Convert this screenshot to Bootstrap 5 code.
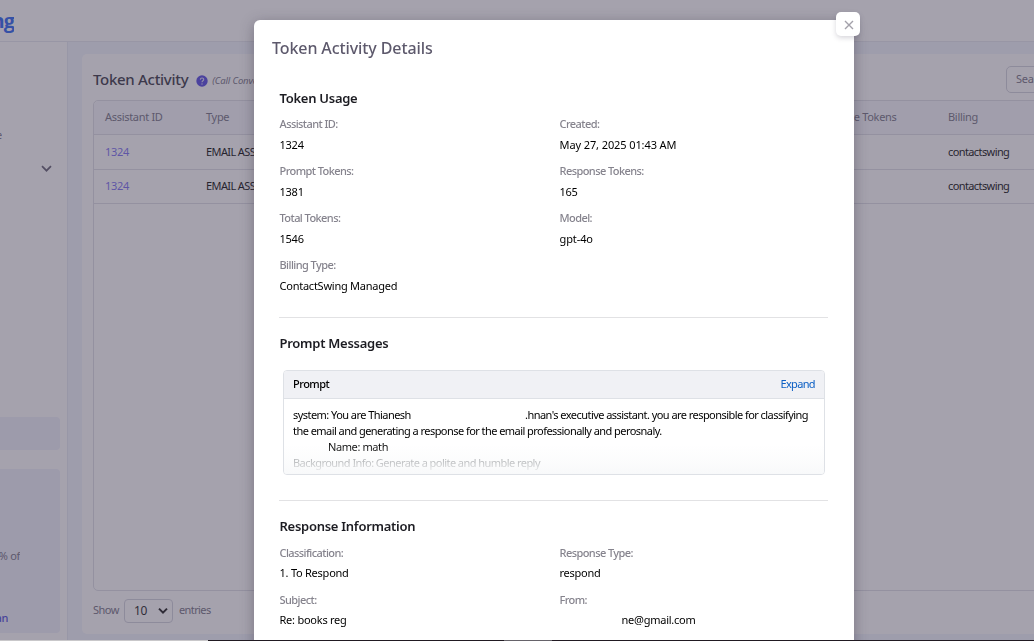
<!DOCTYPE html>
<html lang="en">
<head>
<meta charset="utf-8">
<title>Token Activity</title>
<link rel="stylesheet" href="https://cdn.jsdelivr.net/npm/bootstrap@5.3.0/dist/css/bootstrap.min.css">
<style>
html,body{height:641px;overflow:hidden}
body{font-family:"Noto Sans","Open Sans",sans-serif;font-size:11px;line-height:20px;color:#000;background:#fff;letter-spacing:-.3px}
.app-shell{width:1034px;height:641px;overflow:hidden}
.topbar{height:42px;border-bottom:1px solid #e4e6ee}
.logo-end{width:14px;height:41px;line-height:41px;font-family:"Open Sans",sans-serif;font-size:20px;font-weight:700;letter-spacing:-1px;color:#1f5cf0}
.side{width:68px;height:599px;border-right:1px solid #e4e8f2}
.clip-end{overflow:hidden;white-space:nowrap;display:flex;justify-content:flex-end}
.side-panel{width:60px;background:#eef0fb;border-radius:0 4px 4px 0}
.main-area{background:#f0f4fd;padding:12px 0 7px 14px}
.panel{background:#fff;height:580px;width:980px;padding:0 11px;border-radius:5px}
.page-title{font-size:15px;font-weight:500;color:#2e2d3a;margin-top:-2px}
.muted{color:#6f6c7d}
.grid-box{border:1px solid #dcdde5;border-radius:5px;height:491px;width:1000px}
.g-row{display:grid;grid-template-columns:101px 606px 136px 1fr;padding-left:11px;align-items:center;border-bottom:1px solid #dcdde5;white-space:nowrap}
.g-head{height:34px;background:#f6f7fc;color:#6f6c7d;border-radius:5px 5px 0 0}
.g-head span{margin-top:-1px}
.g-line{height:35px;letter-spacing:-.6px}
.g-line:last-child{height:34px}
.g-line .row-id{color:#7367f0;letter-spacing:-.3px}
.g-line span{margin-top:-1px}
.search{width:130px;height:27px;border:1px solid #cfd0da;border-radius:5px;padding:2px 9px;margin-left:auto}
.select-box{width:49px;height:24px;border:1px solid #cfd0da;border-radius:4px;padding:0 4px 0 9px;font-size:12px;color:#111}
.modal-backdrop{background:#4b465c;--bs-backdrop-opacity:.5;width:1034px;height:640px}
.modal-dialog{width:600px;max-width:600px;margin:20px 0 0 254px}
.modal-content{height:700px;border:0;border-radius:6px;box-shadow:0 3px 14px rgba(47,43,61,.38);color:#000}
.close-box{position:absolute;top:-8px;right:-6px;width:24px;height:24px;padding:1px 0 0 2px;border:0;border-radius:5px;background:#fff;box-shadow:0 2px 5px rgba(75,70,92,.22)}
.dlg-title{font-size:16px;line-height:24px;font-weight:500;color:#5d596c;margin:16px 0 0 18px;letter-spacing:-.1px}
.dlg-body{padding:28px 25px 0}
.sec-title{font-size:13px;line-height:20px;font-weight:600;color:#1c1c22;margin-bottom:5px;letter-spacing:-.27px;padding-left:.5px}
.facts{width:560px}
.facts dl{margin:0 0 5px;padding-left:.5px}
.facts dt{font-weight:500;color:#85838d;line-height:21px;letter-spacing:-.57px}
.facts dd{margin:0;line-height:21px;letter-spacing:-.24px}
.facts .stamp{letter-spacing:-.1px}
.facts-tight{padding-top:2px}
.facts-tight dt,.facts-tight dd{line-height:20px}
.facts-tight dl{margin-bottom:7px}
.rule{height:1px;background:#e2e2e4;width:549px}
.prompt{margin:17px 4px 25px;width:542px;height:105px;border:1px solid #dee1e6;border-radius:4px;overflow:hidden}
.prompt-head{height:28px;background:#f0f1f5;border-bottom:1px solid #dee1e6;padding:0 9px 2px}
.prompt-text{position:relative;height:75px;padding:8px 9px;line-height:16px;white-space:nowrap;letter-spacing:-.55px}
.fade-out{position:absolute;left:0;right:0;bottom:0;height:30px;background:linear-gradient(rgba(255,255,255,0),rgba(248,249,250,.5) 60%,#f8f9fa)}
.bottom-edge{position:fixed;left:0;right:0;top:640px;height:1px;background:#211a22;z-index:1090}
.bottom-edge i{height:1px;background:#c9c8ca;width:208px}
.bottom-edge b{height:1px;background:#66636a;width:48px;margin-left:296px}
</style>
</head>
<body>
<div class="app-shell">
  <header class="topbar"><div class="logo-end clip-end">ng</div></header>
  <div class="d-flex">
    <aside class="side flex-shrink-0">
      <div class="clip-end muted" style="width:2px;margin-top:83px">e</div>
      <div class="d-flex justify-content-end" style="padding:18px 15px 0 0"><svg width="11" height="11" viewBox="0 0 11 11" fill="none" stroke="#5d596c" stroke-width="1.7"><path d="M1 3.2 5.5 7.7 10 3.2"/></svg></div>
      <div class="side-panel" style="height:33px;margin-top:243px"></div>
      <div class="side-panel" style="height:164px;margin-top:19px;padding-top:77px">
        <div class="clip-end muted" style="width:20px">% of</div>
        <div class="clip-end" style="width:8px;margin-top:42px;color:#4540d8;font-weight:500">an</div>
      </div>
    </aside>
    <main class="main-area flex-grow-1 overflow-hidden">
      <div class="panel">
        <div class="d-flex align-items-center" style="height:46px;padding-top:5px;width:1000px">
          <span class="page-title">Token Activity</span>
          <svg style="margin:2px 4px 0 8px" width="12" height="12" viewBox="0 0 12 12"><circle cx="6" cy="6" r="5.7" fill="#4a3ee0"/><path d="M4.3 4.7C4.4 2.4 7.8 2.6 7.7 4.6 7.6 5.7 6 5.8 6 7.2" fill="none" stroke="#dcdaf8" stroke-width="1.1"/><circle cx="6" cy="9" r=".7" fill="#dcdaf8"/></svg>
          <em class="muted" style="font-size:9.5px;margin-top:3px;letter-spacing:-.15px">(Call Conversations)</em>
          <div class="search muted flex-shrink-0" style="margin-right:-43px">Search</div>
        </div>
        <div class="grid-box">
          <div class="g-row g-head"><span>Assistant ID</span><span>Type</span><span>Response Tokens</span><span>Billing</span></div>
          <div class="g-row g-line"><span class="row-id">1324</span><span>EMAIL ASSISTANT</span><span></span><span>contactswing</span></div>
          <div class="g-row g-line"><span class="row-id">1324</span><span>EMAIL ASSISTANT</span><span></span><span>contactswing</span></div>
        </div>
        <div class="d-flex align-items-center muted" style="height:39px;gap:6px">
          <span style="width:25px;letter-spacing:-.5px;margin-top:-1px">Show</span>
          <div class="select-box d-flex align-items-center justify-content-between"><span>10</span><svg width="10" height="8" viewBox="0 0 10 8" fill="none" stroke="#111" stroke-width="2"><path d="M1 1.6 5 5.6 9 1.6"/></svg></div>
          <span style="letter-spacing:-.6px;margin-top:-1px">entries</span>
        </div>
      </div>
    </main>
  </div>
</div>
<div class="modal-backdrop show"></div>
<div class="modal show d-block overflow-hidden" tabindex="-1">
  <div class="modal-dialog">
    <div class="modal-content">
      <button class="close-box d-flex align-items-center justify-content-center" aria-label="Close"><svg width="10" height="10" viewBox="0 0 10 10" stroke="#a3a1aa" stroke-width="1.4"><path d="M1 1l8 8M9 1l-8 8"/></svg></button>
      <h5 class="dlg-title">Token Activity Details</h5>
      <div class="dlg-body">
        <h6 class="sec-title">Token Usage</h6>
        <div class="row g-0 facts">
          <dl class="col-6"><dt>Assistant ID:</dt><dd>1324</dd></dl>
          <dl class="col-6"><dt>Created:</dt><dd class="stamp">May 27, 2025 01:43 AM</dd></dl>
          <dl class="col-6"><dt>Prompt Tokens:</dt><dd>1381</dd></dl>
          <dl class="col-6"><dt>Response Tokens:</dt><dd>165</dd></dl>
          <dl class="col-6"><dt>Total Tokens:</dt><dd>1546</dd></dl>
          <dl class="col-6"><dt>Model:</dt><dd class="stamp">gpt-4o</dd></dl>
          <dl class="col-6"><dt>Billing Type:</dt><dd>ContactSwing Managed</dd></dl>
        </div>
        <div class="rule" style="margin:16px 0 15px"></div>
        <h6 class="sec-title mb-0">Prompt Messages</h6>
        <div class="prompt">
          <div class="prompt-head d-flex align-items-center justify-content-between"><span style="font-weight:500;letter-spacing:-.5px">Prompt</span><span style="color:#0b5fc4;letter-spacing:-.65px">Expand</span></div>
          <div class="prompt-text">
            <div class="d-flex"><span>system: You are Thianesh</span><span class="ms-auto" style="margin-right:7px">.hnan's executive assistant. you are responsible for classifying</span></div>
            <div>the email and generating a response for the email professionally and perosnaly.</div>
            <div style="padding-left:35px;letter-spacing:-.4px">Name: math</div>
            <div style="color:#85888b;line-height:15px">Background Info: Generate a polite and humble reply</div>
            <div class="fade-out"></div>
          </div>
        </div>
        <div class="rule" style="margin-bottom:15px"></div>
        <h6 class="sec-title">Response Information</h6>
        <div class="row g-0 facts facts-tight">
          <dl class="col-6"><dt>Classification:</dt><dd>1. To Respond</dd></dl>
          <dl class="col-6"><dt>Response Type:</dt><dd>respond</dd></dl>
          <dl class="col-6"><dt>Subject:</dt><dd>Re: books reg</dd></dl>
          <dl class="col-6"><dt>From:</dt><dd style="padding-left:62px">ne@gmail.com</dd></dl>
        </div>
      </div>
    </div>
  </div>
</div>
<div class="bottom-edge d-flex"><i></i><b></b></div>
<script src="https://cdn.jsdelivr.net/npm/bootstrap@5.3.0/dist/js/bootstrap.bundle.min.js"></script>
</body>
</html>
